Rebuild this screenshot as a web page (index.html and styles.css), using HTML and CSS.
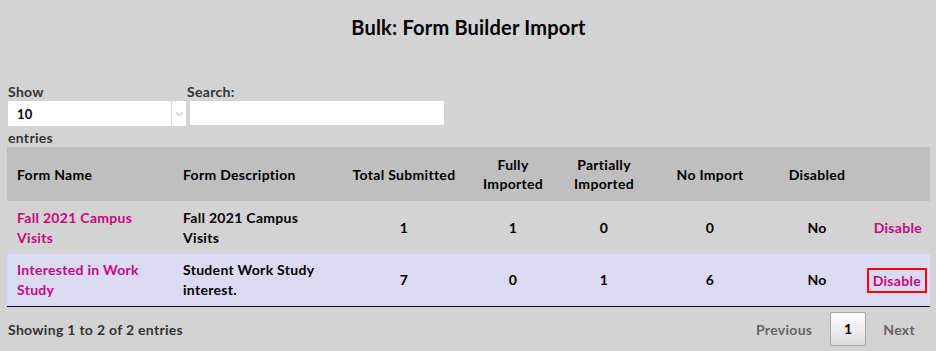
FILE: index.html
```html
<!DOCTYPE html>
<html>
<head>
<meta charset="utf-8">
<link rel="stylesheet" href="styles.css">
</head>
<body>
<div class="page">
  <h1 class="title">Bulk: Form Builder Import</h1>
  <div class="controls">
    <div class="length">
      <div class="label">Show</div>
      <div class="select">
        <span class="select-value">10</span>
        <span class="select-arrow">
          <svg width="9" height="6" viewBox="0 0 9 6"><path d="M1 1.5 L4.5 4.5 L8 1.5" fill="none" stroke="#a8a8a8" stroke-width="1"/></svg>
        </span>
      </div>
      <div class="label">entries</div>
    </div>
    <div class="search">
      <div class="label">Search:</div>
      <div class="input"></div>
    </div>
  </div>
  <table class="grid">
    <colgroup>
      <col class="c1"><col class="c2"><col class="c3"><col class="c4"><col class="c5"><col class="c6"><col class="c7"><col class="c8">
    </colgroup>
    <thead>
      <tr>
        <th class="left">Form Name</th>
        <th class="left">Form Description</th>
        <th>Total Submitted</th>
        <th>Fully<br>Imported</th>
        <th>Partially<br>Imported</th>
        <th>No Import</th>
        <th>Disabled</th>
        <th></th>
      </tr>
    </thead>
    <tbody>
      <tr class="odd">
        <td class="left"><a class="link">Fall 2021 Campus Visits</a></td>
        <td class="left">Fall 2021 Campus Visits</td>
        <td>1</td>
        <td>1</td>
        <td>0</td>
        <td>0</td>
        <td>No</td>
        <td class="right"><a class="link">Disable</a></td>
      </tr>
      <tr class="even">
        <td class="left"><a class="link">Interested in Work Study</a></td>
        <td class="left">Student Work Study interest.</td>
        <td>7</td>
        <td>0</td>
        <td>1</td>
        <td>6</td>
        <td>No</td>
        <td class="right"><a class="link focused">Disable</a></td>
      </tr>
    </tbody>
  </table>
  <div class="footer">
    <div class="info">Showing 1 to 2 of 2 entries</div>
    <div class="pager">
      <span class="pg prev">Previous</span>
      <span class="pg current">1</span>
      <span class="pg next">Next</span>
    </div>
  </div>
</div>
</body>
</html>
```
FILE: styles.css
```css
html, body {
  margin: 0;
  padding: 0;
  background: #d3d3d3;
}
body {
  font-family: "Lato", "Noto Sans", sans-serif;
  font-weight: 700;
  font-size: 14px;
  letter-spacing: 0.3px;
  color: #000;
}
.page {
  width: 936px;
  height: 351px;
  padding: 0 6px 0 7px;
  box-sizing: border-box;
  overflow: hidden;
}
.title {
  margin: 0;
  padding-top: 15px;
  height: 40px;
  line-height: 24px;
  font-size: 20px;
  font-weight: 700;
  letter-spacing: 0.2px;
  text-align: center;
}
.controls {
  display: flex;
  align-items: flex-start;
  gap: 1px;
  margin-top: 28px;
}
.label {
  color: #333;
  line-height: 17px;
  height: 18px;
}
.length {
  display: flex;
  flex-direction: column;
  padding-left: 1px;
}
.select {
  display: flex;
  width: 178px;
  height: 25px;
  background: #fff;
  box-sizing: border-box;
}
.select-value {
  flex: 1;
  padding-left: 9px;
  line-height: 27px;
  font-size: 13px;
  color: #000;
  border-right: 1px solid #d8d8d8;
}
.select-arrow {
  width: 14px;
  display: flex;
  align-items: center;
  justify-content: center;
}
.length .label:last-child {
  margin-top: 3px;
}
.search {
  display: flex;
  flex-direction: column;
}
.input {
  margin-left: 3px;
  width: 254px;
  height: 24px;
  background: #fff;
}
.grid {
  width: 923px;
  border-collapse: collapse;
  table-layout: fixed;
}
.c1 { width: 166px; }
.c2 { width: 168px; }
.c3 { width: 126px; }
.c4 { width: 92px; }
.c5 { width: 90px; }
.c6 { width: 122px; }
.c7 { width: 92px; }
.c8 { width: 67px; }
.grid th {
  background: #bfbfbf;
  height: 54px;
  padding: 0 10px;
  line-height: 19px;
  font-weight: 700;
  text-align: center;
  box-sizing: border-box;
}
.grid td {
  padding: 0 10px;
  line-height: 20px;
  text-align: center;
  vertical-align: middle;
}
.grid tbody tr.odd td {
  background: #d3d3d3;
  height: 53px;
}
.grid tbody tr.even td {
  background: #dadaf3;
  height: 52px;
  border-bottom: 1px solid #111;
}
.grid .left { text-align: left; }
.grid .right { text-align: right; padding-left: 0; padding-right: 8px; }
.link {
  color: #c8087f;
}
.focused {
  display: inline-block;
  line-height: 21px;
  padding: 0 4px;
  outline: 2px solid #f00;
  outline-offset: 0;
  margin-right: -3px;
}
.footer {
  display: flex;
  justify-content: space-between;
  align-items: center;
  margin-top: 5px;
}
.info {
  color: #333;
  padding-left: 1px;
}
.pager {
  display: flex;
  align-items: center;
  padding-right: 15px;
}
.pg {
  color: #666;
  line-height: 31px;
}
.prev { margin-right: 18px; }
.next { margin-left: 17px; }
.current {
  color: #000;
  width: 36px;
  height: 34px;
  line-height: 32px;
  text-align: center;
  border: 1px solid #a5a5a5;
  border-radius: 2px;
  background: linear-gradient(#fff, #dcdcdc);
  box-sizing: border-box;
}
```
